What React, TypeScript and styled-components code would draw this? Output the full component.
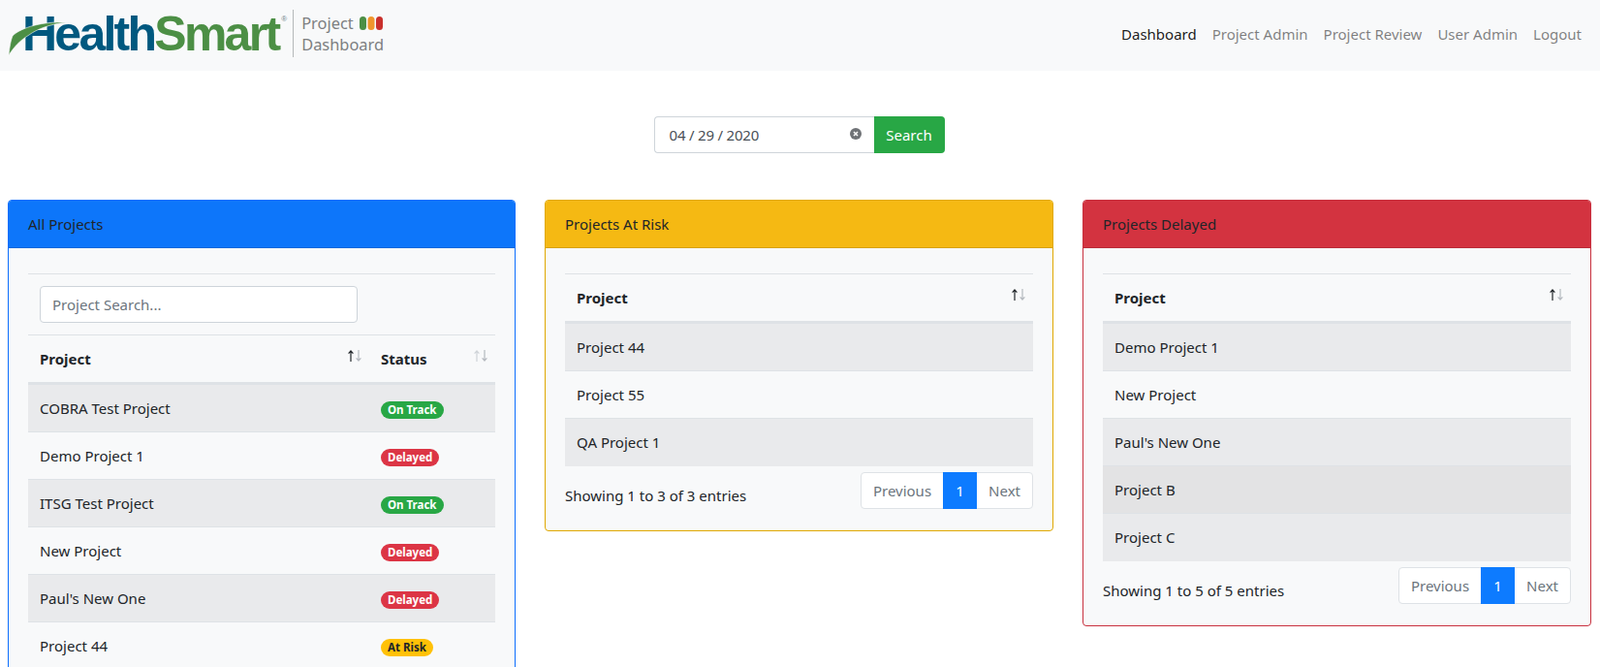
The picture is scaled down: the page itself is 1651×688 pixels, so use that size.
import React from 'react'
import styled, { createGlobalStyle } from 'styled-components'

type Status = 'On Track' | 'Delayed' | 'At Risk'
type Row = { name: string; status?: Status; hover?: boolean; striped?: boolean }

const GlobalStyle = createGlobalStyle`
  html, body {
    margin: 0;
    height: 100%;
    overflow: hidden;
    background: #fff;
  }
  body {
    font-family: "Noto Sans", "Open Sans", sans-serif;
    font-size: 15px;
    line-height: 24px;
    color: #212529;
  }
  * { box-sizing: border-box; }
`
const Navbar = styled.nav`
  display: flex;
  align-items: center;
  justify-content: space-between;
  height: 73px;
  padding: 0 11px 4px 23px;
  background: #f8f9fa;
`
const Brand = styled.div`
  display: flex;
  align-items: center;
  position: relative;
`
const LogoText = styled.div`
  display: flex;
  font-family: "Liberation Sans", Arial, sans-serif;
  font-weight: 700;
  font-size: 50px;
  line-height: 50px;
  letter-spacing: -2.75px;
`
const LogoPart = styled.span<{ $color: string }>`
  color: ${(p) => p.$color};
`
const Registered = styled.sup`
  font-size: 8px;
  line-height: 8px;
  letter-spacing: 0;
  font-weight: 400;
  color: #6f7f88;
  margin: 6px 0 0 3px;
  align-self: flex-start;
`
const Swoosh = styled.svg`
  position: absolute;
  left: -23px;
  top: -10px;
  width: 70px;
  height: 60px;
`
const BrandDivider = styled.div`
  width: 1px;
  height: 49px;
  margin: 0 8px 0 6px;
  background: #b5b8ba;
`
const BrandTitle = styled.div`
  display: flex;
  flex-direction: column;
  font-size: 16.4px;
  line-height: 22px;
  color: #7d7f81;
`
const BrandLine = styled.div`
  display: flex;
  align-items: center;
  gap: 6px;
`
const NavLinks = styled.div`
  display: flex;
`
const NavLink = styled.a<{ $active?: boolean }>`
  padding: 0 8px;
  color: ${(p) => (p.$active ? 'rgba(0, 0, 0, 0.9)' : 'rgba(0, 0, 0, 0.5)')};
  text-decoration: none;
`
const SearchForm = styled.form`
  display: flex;
  justify-content: center;
  margin-top: 47px;
  margin-bottom: 48px;
  padding-right: 2px;
`
const DateBox = styled.div`
  display: flex;
  align-items: center;
  justify-content: space-between;
  width: 227px;
  height: 38px;
  padding: 0 13px 0 15px;
  border: 1px solid #ced4da;
  border-right: 0;
  border-radius: 4px 0 0 4px;
  color: #495057;
  letter-spacing: -0.2px;
`
const ClearIcon = styled.svg`
  width: 12px;
  height: 12px;
  margin-top: -3px;
`
const SearchButton = styled.button`
  width: 73px;
  height: 38px;
  padding: 0;
  border: 0;
  border-radius: 0 4px 4px 0;
  background: #28a745;
  color: #fff;
  font: inherit;
`
const Columns = styled.div`
  display: grid;
  grid-template-columns: 524px 525px 1fr;
  gap: 30px;
  align-items: start;
  padding: 0 9px 0 8px;
`
const Card = styled.section<{ $color: string }>`
  border: 1px solid ${(p) => p.$color};
  border-radius: 4px;
  background: #f8f9fa;
`
const CardHeader = styled.header<{ $color: string }>`
  height: 49px;
  padding: 12px 20px;
  background: ${(p) => p.$color};
  border-bottom: 1px solid rgba(0, 0, 0, 0.125);
  border-radius: 3px 3px 0 0;
`
const CardBody = styled.div`
  padding: 26px 20px 22px;
`
const SearchRow = styled.div`
  padding: 12px;
  border-top: 1px solid #dee2e6;
`
const SearchInput = styled.input`
  display: block;
  width: 328px;
  height: 38px;
  padding: 0 12px;
  border: 1px solid #ced4da;
  border-radius: 4px;
  background: #fff;
  font: inherit;
  color: #495057;
  &::placeholder { color: #6c757d; opacity: 1; }
`
const Table = styled.table`
  width: 100%;
  table-layout: fixed;
  border-collapse: collapse;
`
const HeadCell = styled.th<{ $width?: number }>`
  width: ${(p) => (p.$width ? `${p.$width}px` : 'auto')};
  padding: 12px 8px 12px 12px;
  border-top: 1px solid #dee2e6;
  border-bottom: 3px solid #dee2e6;
  text-align: left;
  font-weight: 700;
`
const HeadInner = styled.div`
  display: flex;
  justify-content: space-between;
`
const SortIcon = styled.svg`
  width: 14px;
  height: 12px;
  margin-top: 3px;
`
const BodyRow = styled.tr<{ $bg: string }>`
  background: ${(p) => p.$bg};
`
const Cell = styled.td`
  height: 49px;
  padding: 12px;
  border-top: 1px solid #dee2e6;
`
const Badge = styled.span<{ $bg: string; $fg: string }>`
  display: inline-block;
  padding: 0 7px;
  height: 18px;
  border-radius: 9px;
  background: ${(p) => p.$bg};
  color: ${(p) => p.$fg};
  font-size: 11.5px;
  line-height: 18px;
  font-weight: 700;
  vertical-align: middle;
`
const TableFooter = styled.div`
  display: flex;
  justify-content: space-between;
  align-items: flex-start;
  margin-top: 6px;
`
const Info = styled.div`
  padding-top: 12px;
`
const Pagination = styled.div`
  display: flex;
  height: 38px;
  border: 1px solid #dee2e6;
  border-radius: 4px;
  background: #fff;
`
const PageLink = styled.a<{ $active?: boolean }>`
  margin: ${(p) => (p.$active ? '-1px 0' : '0')};
  min-width: ${(p) => (p.$active ? '35px' : '0')};
  padding: ${(p) => (p.$active ? '7px 0' : '6px 12px')};
  text-align: center;
  background: ${(p) => (p.$active ? '#0d7bff' : 'transparent')};
  color: ${(p) => (p.$active ? '#fff' : '#6c757d')};
`

const badgeColors: Record<Status, { bg: string; fg: string }> = {
  'On Track': { bg: '#28a745', fg: '#fff' },
  Delayed: { bg: '#dc3545', fg: '#fff' },
  'At Risk': { bg: '#ffc107', fg: '#212529' },
}

const allProjects: Row[] = [
  { name: 'COBRA Test Project', status: 'On Track', striped: true },
  { name: 'Demo Project 1', status: 'Delayed' },
  { name: 'ITSG Test Project', status: 'On Track', striped: true },
  { name: 'New Project', status: 'Delayed' },
  { name: "Paul's New One", status: 'Delayed', striped: true },
  { name: 'Project 44', status: 'At Risk' },
]
const atRisk: Row[] = [
  { name: 'Project 44', striped: true },
  { name: 'Project 55' },
  { name: 'QA Project 1', striped: true },
]
const delayed: Row[] = [
  { name: 'Demo Project 1', striped: true },
  { name: 'New Project' },
  { name: "Paul's New One", striped: true },
  { name: 'Project B', hover: true },
  { name: 'Project C', striped: true },
]

const rowColor = (row: Row) => {
  if (row.hover) return '#e3e3e4'
  return row.striped ? '#e9eaec' : 'transparent'
}

const Sort: React.FC<{ active?: boolean }> = ({ active }) => (
  <SortIcon viewBox="0 0 14 12" fill="none" strokeWidth="1.2">
    <path d="M3 12V1M0.6 3.6L3 1L5.4 3.6" stroke={active ? '#212529' : '#cfd3d8'} />
    <path d="M11 0V11M8.6 8.4L11 11L13.4 8.4" stroke="#b5b9bf" />
  </SortIcon>
)

const ProjectTable: React.FC<{ rows: Row[]; withStatus?: boolean }> = ({ rows, withStatus }) => (
  <Table>
    <thead>
      <tr>
        <HeadCell>
          <HeadInner>Project<Sort active /></HeadInner>
        </HeadCell>
        {withStatus && (
          <HeadCell $width={130}>
            <HeadInner>Status<Sort /></HeadInner>
          </HeadCell>
        )}
      </tr>
    </thead>
    <tbody>
      {rows.map((row) => (
        <BodyRow key={row.name} $bg={rowColor(row)}>
          <Cell>{row.name}</Cell>
          {withStatus && row.status && (
            <Cell>
              <Badge $bg={badgeColors[row.status].bg} $fg={badgeColors[row.status].fg}>{row.status}</Badge>
            </Cell>
          )}
        </BodyRow>
      ))}
    </tbody>
  </Table>
)

const Footer: React.FC<{ count: number }> = ({ count }) => (
  <TableFooter>
    <Info>Showing 1 to {count} of {count} entries</Info>
    <Pagination>
      <PageLink>Previous</PageLink>
      <PageLink $active>1</PageLink>
      <PageLink>Next</PageLink>
    </Pagination>
  </TableFooter>
)

const App: React.FC = () => {
  return (
    <>
      <GlobalStyle />
      <Navbar>
        <Brand>
          <LogoText>
            <LogoPart $color="#00587f">Health</LogoPart>
            <LogoPart $color="#4c8f45">Smart</LogoPart>
            <Registered>®</Registered>
          </LogoText>
          <Swoosh viewBox="0 0 70 60">
            <path
              d="M9 57C10 48 11 42 13 37C22 28 45 22 68 23C52 25 38 30 30 36C20 42 14 49 9 57Z"
              fill="#4c8f45"
              stroke="#f8f9fa"
              strokeWidth="0.6"
            />
          </Swoosh>
          <BrandDivider />
          <BrandTitle>
            <BrandLine>
              Project
              <svg width="24" height="14" viewBox="0 0 24 14">
                <rect x="0" y="0" width="7" height="14" rx="3.5" fill="#4c8f45" />
                <rect x="8.5" y="0" width="7" height="14" rx="3.5" fill="#f0962c" />
                <rect x="17" y="0" width="7" height="14" rx="3.5" fill="#c9302c" />
              </svg>
            </BrandLine>
            <BrandLine>Dashboard</BrandLine>
          </BrandTitle>
        </Brand>
        <NavLinks>
          <NavLink $active>Dashboard</NavLink>
          <NavLink>Project Admin</NavLink>
          <NavLink>Project Review</NavLink>
          <NavLink>User Admin</NavLink>
          <NavLink>Logout</NavLink>
        </NavLinks>
      </Navbar>
      <SearchForm>
        <DateBox>
          04 / 29 / 2020
          <ClearIcon viewBox="0 0 12 12">
            <circle cx="6" cy="6" r="6" fill="#6f7276" />
            <path d="M4 4L8 8M8 4L4 8" stroke="#fff" strokeWidth="1.5" />
          </ClearIcon>
        </DateBox>
        <SearchButton type="button">Search</SearchButton>
      </SearchForm>
      <Columns>
        <Card $color="#0d6efd">
          <CardHeader $color="#0d76fa">All Projects</CardHeader>
          <CardBody>
            <SearchRow>
              <SearchInput placeholder="Project Search..." />
            </SearchRow>
            <ProjectTable rows={allProjects} withStatus />
          </CardBody>
        </Card>
        <Card $color="#e0a800">
          <CardHeader $color="#f5b913">Projects At Risk</CardHeader>
          <CardBody>
            <ProjectTable rows={atRisk} />
            <Footer count={3} />
          </CardBody>
        </Card>
        <Card $color="#c8303e">
          <CardHeader $color="#d33340">Projects Delayed</CardHeader>
          <CardBody>
            <ProjectTable rows={delayed} />
            <Footer count={5} />
          </CardBody>
        </Card>
      </Columns>
    </>
  )
}

export default App
